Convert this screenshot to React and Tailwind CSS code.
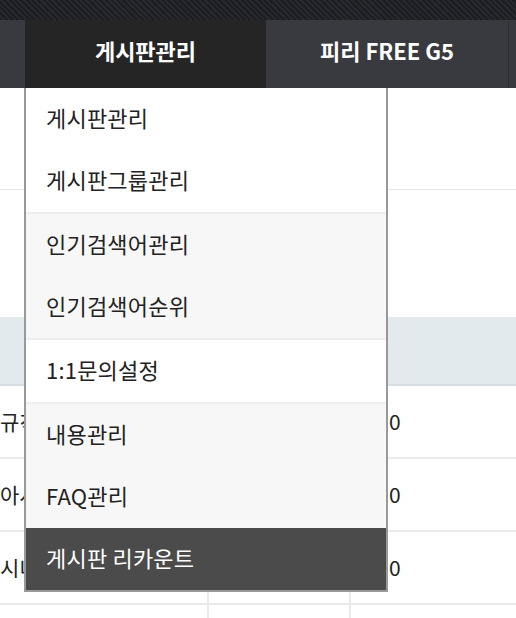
const font = { fontFamily: '"Noto Sans CJK KR", "Noto Sans", sans-serif' };

const groups = [
  { bg: "bg-white", items: ["게시판관리", "게시판그룹관리"] },
  { bg: "bg-[#f7f7f7]", items: ["인기검색어관리", "인기검색어순위"] },
  { bg: "bg-white", items: ["1:1문의설정"] },
  { bg: "bg-[#f7f7f7]", items: ["내용관리", "FAQ관리", "게시판 리카운트"] },
];

const rows = [
  { name: "규칙게시판", count: "0" },
  { name: "아시아", count: "0" },
  { name: "시니어", count: "0" },
];

function Dropdown() {
  return (
    <div className="absolute left-[24px] top-[88px] w-[364px] border-2 border-t-0 border-[#999]">
      {groups.map((g, gi) => (
        <ul key={gi} className={`${g.bg} ${gi > 0 ? "border-t-2 border-[#eeeeee]" : ""}`}>
          {g.items.map((it) => {
            const active = it === "게시판 리카운트";
            return (
              <li
                key={it}
                className={`flex h-[62px] items-center pb-1 pl-5 text-[22px] tracking-[0.2px] ${
                  active ? "bg-[#4b4b4b] text-white" : "text-[#222]"
                }`}
              >
                {it}
              </li>
            );
          })}
        </ul>
      ))}
    </div>
  );
}

export default function App() {
  return (
    <div className="relative h-[618px] w-[516px] overflow-hidden bg-white" style={font}>
      <div className="h-5 bg-[repeating-linear-gradient(45deg,#1c1d21_0px,#1c1d21_2px,#28292e_2px,#28292e_4px)]" />

      <nav className="flex h-[68px] bg-[#393a40] text-[22px] font-bold text-white">
        <div className="w-[25px]" />
        <div className="flex w-[241px] items-center justify-center bg-[#252525] pb-2">게시판관리</div>
        <div className="flex w-[243px] items-center justify-center border-r border-[#2b2c30] pb-2">
          피리 FREE G5
        </div>
        <div className="flex-1" />
      </nav>

      {/* table behind the menu */}
      <div className="text-[21px] text-[#222]">
        <div className="h-[102px] border-b border-[#e5e5e5]" />
        <div className="h-[127px]" />
        <div className="h-[69px] border-b-2 border-[#d5dfe3] bg-[#e3eaed]" />
        {rows.map((r) => (
          <div key={r.name} className="grid h-[73px] grid-cols-[209px_142px_1fr] border-b-2 border-[#eaeaea]">
            <div className="flex items-center overflow-hidden border-r-2 border-[#eaeaea]">
              <span className="w-[24px] overflow-hidden whitespace-nowrap">{r.name}</span>
            </div>
            <div className="border-r-2 border-[#eaeaea]" />
            <div className="flex items-center pl-[38px]">{r.count}</div>
          </div>
        ))}
        <div className="grid h-[40px] grid-cols-[209px_142px_1fr]">
          <div className="border-r-2 border-[#eaeaea]" />
          <div className="border-r-2 border-[#eaeaea]" />
          <div />
        </div>
      </div>

      <Dropdown />
    </div>
  );
}
